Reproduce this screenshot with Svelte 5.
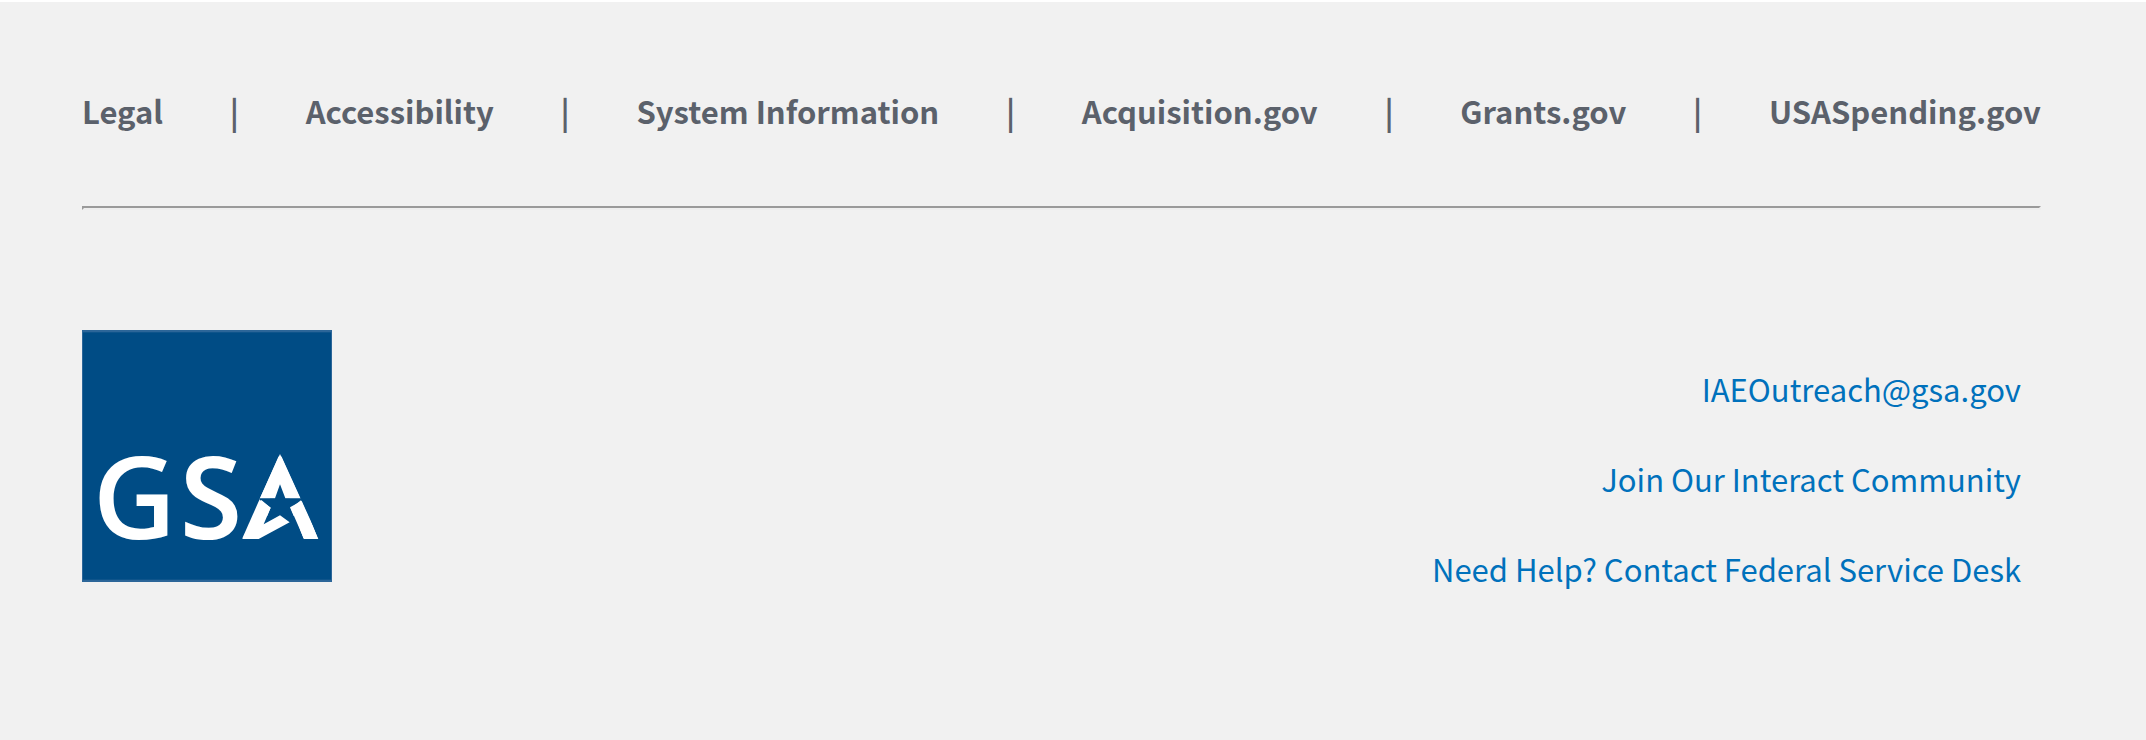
<script>
  const siteLinks = [
    'Legal',
    'Accessibility',
    'System Information',
    'Acquisition.gov',
    'Grants.gov',
    'USASpending.gov'
  ];
  const contactLinks = [
    { label: 'IAEOutreach@gsa.gov', href: 'mailto:IAEOutreach@gsa.gov' },
    { label: 'Join Our Interact Community', href: '#community' },
    { label: 'Need Help? Contact Federal Service Desk', href: '#help' }
  ];
</script>

<footer class="footer">
  <nav class="sites" aria-label="Related sites">
    {#each siteLinks as label, i}
      {#if i > 0}<span aria-hidden="true">|</span>{/if}
      <a href="#{label}">{label}</a>
    {/each}
  </nav>
  <hr />
  <div class="agency">
    <svg class="logo" viewBox="0 0 750 756" role="img" aria-label="GSA">
      <defs>
        <clipPath id="peak"><path d="M594 370L711 627H480Z" /></clipPath>
      </defs>
      <rect width="750" height="756" fill="#2c6699" />
      <rect x="3" y="7" width="744" height="742" fill="#004c85" />
      <g class="lettering">
        <text x="32" y="628">G</text>
        <text class="narrow" x="293" y="628">S</text>
        <text x="479" y="627" clip-path="url(#peak)">A</text>
      </g>
      <!-- star cut out of the A, with the gap between its feet -->
      <path fill="#fff" d="M594 372L655 506H533Z" />
      <path
        fill="#004c85"
        d="M594 463L610 505H660V512L624 532L666 630H530L545 583L566 533L533 509V505H579Z"
      />
      <path fill="#fff" d="M657 511L709 627H666L626 535Z" />
      <path fill="#fff" d="M538 510L566 533L545 583L594 556L623 577L530 627H482Z" />
    </svg>
    <ul class="contacts">
      {#each contactLinks as link}
        <li><a href={link.href}>{link.label}</a></li>
      {/each}
    </ul>
  </div>
</footer>

<style>
  :global(body) {
    margin: 0;
    background: #f1f1f1;
  }

  .footer {
    padding: 85px 105px 140px 82px;
    border-top: 2px solid #fff;
    font-family: 'Source Sans Pro', 'Noto Sans CJK SC', sans-serif;
    font-size: 31px;
    line-height: 48px;
  }

  a {
    text-decoration: none;
  }

  .sites {
    display: flex;
    justify-content: space-between;
    color: #5b616b;
    font-weight: 700;
  }

  .sites a {
    color: inherit;
  }

  hr {
    margin: 71px 0 0;
    border: 2px solid #eee;
    border-top-color: #9a9a9a;
    border-left-color: #9a9a9a;
  }

  .agency {
    display: flex;
    justify-content: space-between;
    align-items: flex-start;
    padding: 120px 20px 0 0;
  }

  .logo {
    display: block;
    width: 250px;
    height: 252px;
  }

  .lettering {
    fill: #fff;
    font-family: 'Open Sans', sans-serif;
    font-size: 345px;
    font-weight: 600;
  }

  .lettering .narrow {
    font-family: 'Noto Sans', 'Open Sans', sans-serif;
    font-size: 340px;
  }

  .contacts {
    display: grid;
    gap: 42px;
    margin: 0;
    padding: 35px 0 0;
    list-style: none;
    text-align: right;
  }

  .contacts a {
    color: #0071bc;
  }
</style>
